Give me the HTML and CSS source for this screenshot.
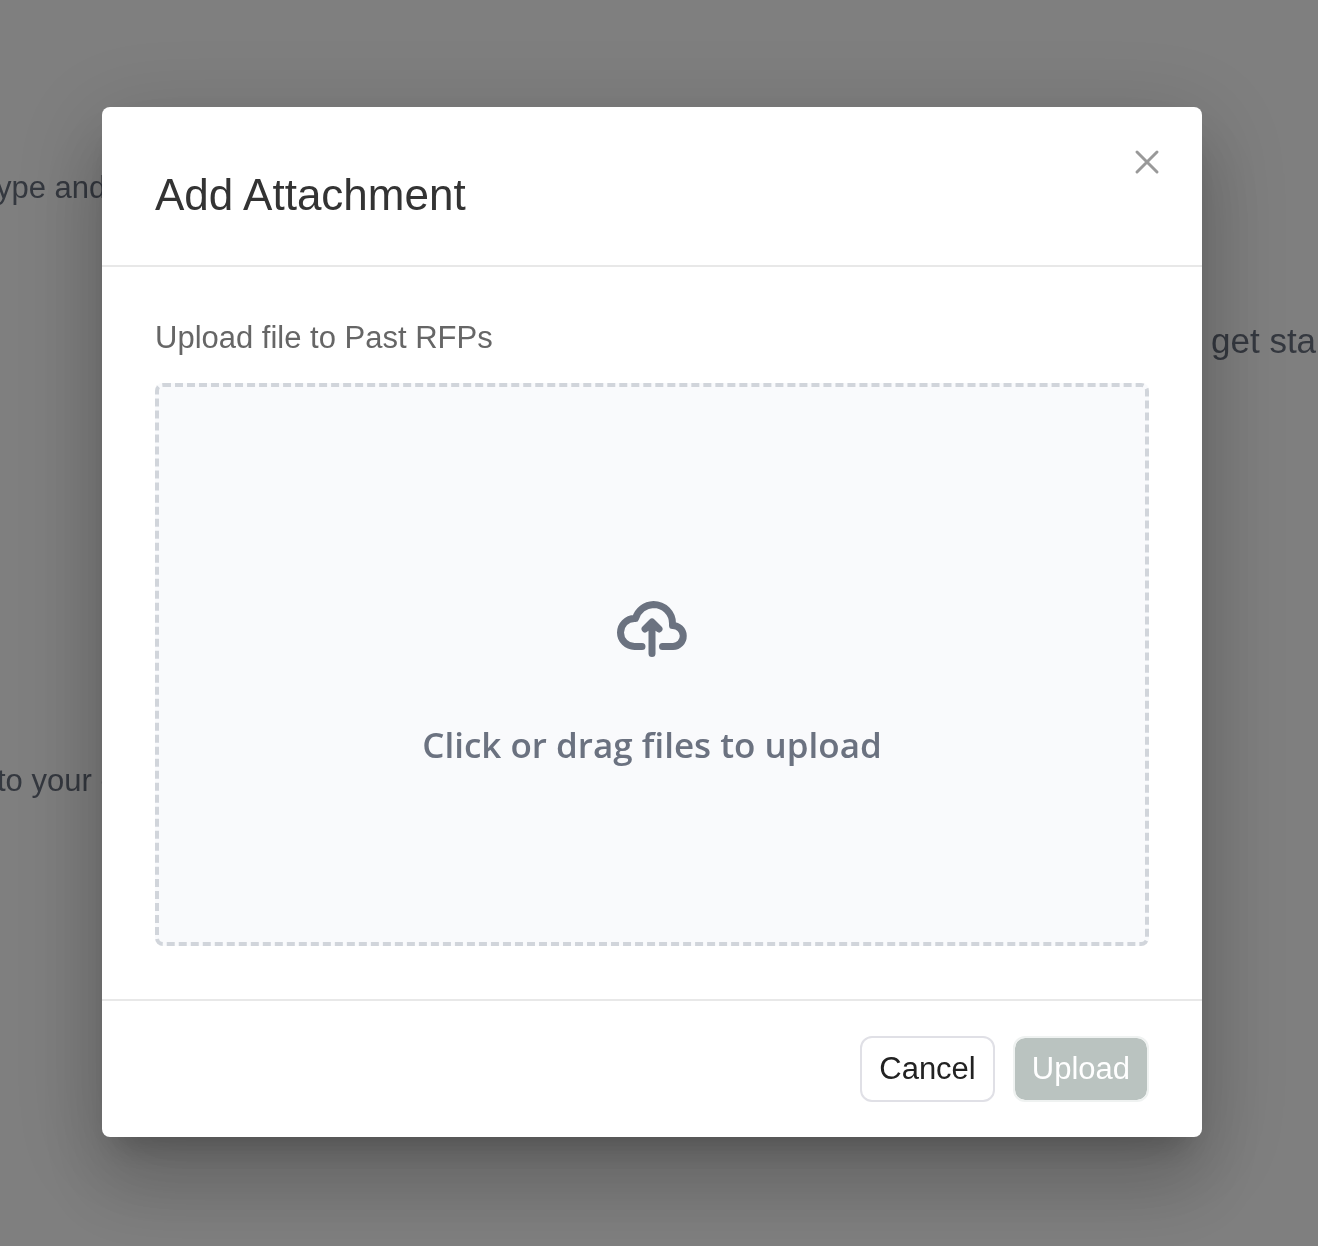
FILE: index.html
```html
<!DOCTYPE html>
<html lang="en">
<head>
  <meta charset="UTF-8">
  <meta name="viewport" content="width=device-width, initial-scale=1.0">
  <title>Add Attachment</title>
  <link rel="stylesheet" href="styles.css">
</head>
<body>
  <!-- page text behind the dialog -->
  <div class="page">
    <p class="hint hint-type">ype and</p>
    <p class="hint hint-start">get sta</p>
    <p class="hint hint-add">to your c</p>
  </div>

  <div class="overlay">
    <div class="modal" role="dialog" aria-modal="true" aria-labelledby="modalTitle">
      <div class="modal-header">
        <h1 id="modalTitle">Add Attachment</h1>
        <button type="button" class="close" aria-label="Close">
          <svg width="36" height="36" viewBox="0 0 36 36">
            <path d="M8 9L28 29M28 9L8 29"/>
          </svg>
        </button>
      </div>

      <div class="modal-body">
        <p class="caption">Upload file to Past RFPs</p>
        <label class="dropzone" for="fileInput">
          <input type="file" id="fileInput" class="file-input" multiple>
          <svg class="cloud" width="72" height="60" viewBox="0 0 72 60">
            <path d="M26 47.5H18.5A14 14 0 0 1 18.5 19.5H19.5A19.3 19.3 0 0 1 37.5 5.5A19 19 0 0 1 56.5 24.5V26.5A10.5 10.5 0 0 1 57 47.5H46.5"/>
            <path d="M36 54.5V24M29 30L36 23L43 30L36 25Z"/>
          </svg>
          <span class="dropzone-text">Click or drag files to upload</span>
        </label>
      </div>

      <div class="modal-footer">
        <button type="button" class="btn btn-cancel">Cancel</button>
        <button type="button" class="btn btn-upload" disabled>Upload</button>
      </div>
    </div>
  </div>
</body>
</html>
```
FILE: styles.css
```css
* {
  box-sizing: border-box;
}

body {
  font-family: "Liberation Sans", Arial, sans-serif;
  margin: 0;
  min-height: 100vh;
  background-color: #fff;
  overflow: hidden;
}

h1, p {
  margin: 0;
  font-weight: normal;
}

/* page behind the dialog */
.page {
  position: fixed;
  inset: 0;
  color: #6b7280;
}

.hint {
  position: absolute;
  white-space: nowrap;
  font-size: 31px;
  line-height: 38px;
}

.hint-type {
  left: -4px;
  top: 169px;
}

.hint-start {
  left: 1211px;
  top: 322px;
  font-size: 35px;
}

.hint-add {
  left: -3px;
  top: 762px;
}

.overlay {
  position: fixed;
  inset: 0;
  display: flex;
  align-items: flex-start;
  padding: 107px 116px 109px 102px;
  background-color: rgba(0, 0, 0, 0.5);
  overflow: auto;
}

.modal {
  flex: 1;
  background-color: #fff;
  border-radius: 8px;
  box-shadow: 0 22px 30px -14px rgba(0, 0, 0, 0.2),
    0 48px 76px 6px rgba(0, 0, 0, 0.14),
    0 18px 92px 16px rgba(0, 0, 0, 0.12);
}

.modal-header {
  display: flex;
  justify-content: space-between;
  align-items: flex-start;
  padding: 36px 37px 43px 53px;
  border-bottom: 2px solid #e8e8e8;
}

.modal-header h1 {
  margin-top: 25px;
  font-size: 44px;
  line-height: 54px;
  color: #333;
}

.close {
  display: flex;
  padding: 0;
  border: none;
  background: none;
  cursor: pointer;
}

.close path {
  fill: none;
  stroke: #999;
  stroke-width: 3;
  stroke-linecap: round;
}

.modal-body {
  padding: 52px 53px 53px;
}

.caption {
  margin-bottom: 26px;
  font-size: 31px;
  line-height: 38px;
  color: #666;
}

.dropzone {
  display: flex;
  flex-direction: column;
  align-items: center;
  gap: 61px;
  padding: 212px 20px 172px;
  border: 4px dashed #d1d5db;
  border-radius: 8px;
  background-color: #f9fafc;
  cursor: pointer;
}

.file-input {
  position: absolute;
  width: 1px;
  height: 1px;
  opacity: 0;
}

.cloud path {
  fill: none;
  stroke: #6b7280;
  stroke-width: 7;
  stroke-linecap: round;
  stroke-linejoin: round;
}

.dropzone-text {
  font-family: "Open Sans", sans-serif;
  font-size: 35px;
  font-weight: 600;
  line-height: 50px;
  color: #6b7280;
}

.modal-footer {
  display: flex;
  justify-content: flex-end;
  gap: 18px;
  padding: 35px 53px;
  border-top: 2px solid #e8e8e8;
}

.btn {
  padding: 12px 17px;
  border: 2px solid #e0e0e6;
  border-radius: 12px;
  background-color: #fff;
  background-clip: padding-box;
  font-family: inherit;
  font-size: 31px;
  line-height: 38px;
  color: #222;
  cursor: pointer;
}

.btn-upload {
  border-color: #eff2f1;
  background-color: #bac3c0;
  color: #fff;
}

.btn:disabled {
  cursor: not-allowed;
}
```
